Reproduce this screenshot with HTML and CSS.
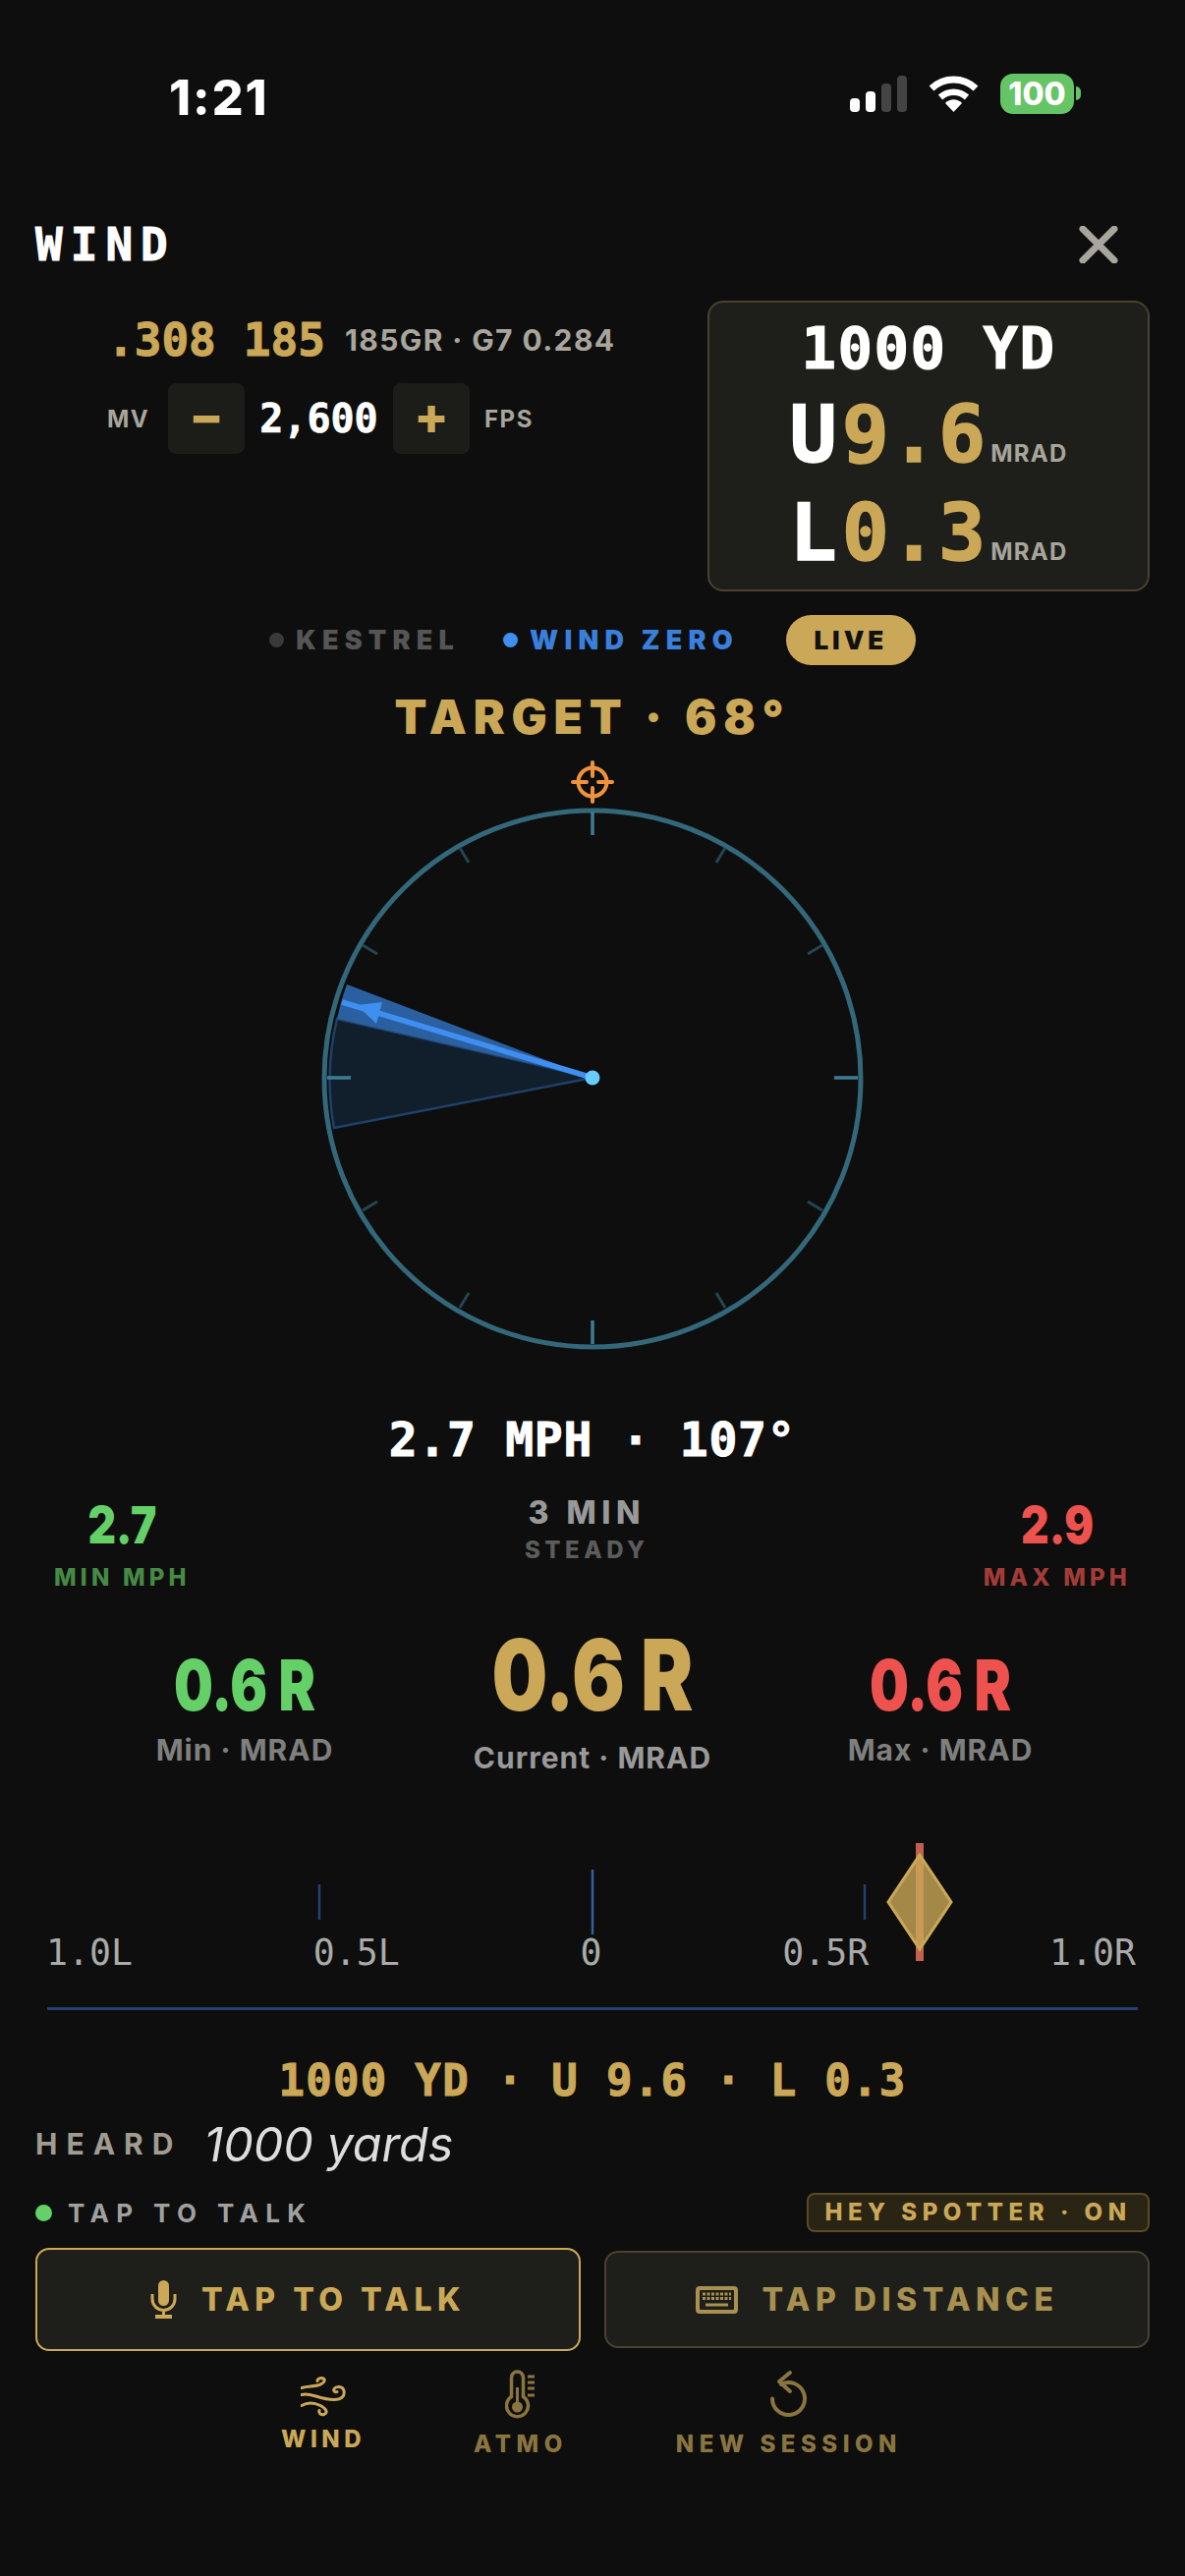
FILE: index.html
```html
<!DOCTYPE html>
<html>
<head>
<meta charset="utf-8"/>
<title>Wind</title>
<link rel="stylesheet" href="styles.css">
</head>
<body>
<div class="screen">
    <div class="status">
        <span class="time">1:21</span>
        <div class="status-icons">
            <svg class="signal" width="58" height="37" viewBox="0 0 58 37">
                <rect x="0" y="23" width="10" height="14" rx="4" fill="#fff"/>
                <rect x="16" y="16" width="10" height="21" rx="4" fill="#fff"/>
                <rect x="32" y="8" width="10" height="29" rx="4" fill="#444"/>
                <rect x="48" y="0" width="10" height="37" rx="4" fill="#444"/>
            </svg>
            <svg class="wifi" width="51" height="37" viewBox="0 0 51 37">
                <path d="M3 13 C16 1 35 1 48 13" fill="none" stroke="#fff" stroke-width="7"/>
                <path d="M12 22 C20 15 31 15 39 22" fill="none" stroke="#fff" stroke-width="6.5"/>
                <path d="M17 28 C22 23 29 23 34 28 L25.5 37 Z" fill="#fff"/>
            </svg>
            <div class="battery">100</div>
            <div class="battery-nib"></div>
        </div>
    </div>

    <div class="header">
        <span class="title">WIND</span>
        <svg width="40" height="38" viewBox="0 0 40 38">
            <path d="M4 3 L36 35 M36 3 L4 35" stroke="#a8a59c" stroke-width="7" stroke-linecap="round"/>
        </svg>
    </div>

    <div class="top">
        <div class="load">
            <div class="load-line">
                <span class="gold-num">.308</span>
                <span class="gold-num">185</span>
                <span class="load-info">185GR · G7 0.284</span>
            </div>
            <div class="mv-line">
                <span class="mv-label">MV</span>
                <span class="step">−</span>
                <span class="mv-val">2,600</span>
                <span class="step">+</span>
                <span class="mv-label fps">FPS</span>
            </div>
        </div>
        <div class="panel">
            <div class="panel-range">1000 YD</div>
            <div class="panel-line"><span class="dir">U</span><span class="amt">9.6</span><span class="unit">MRAD</span></div>
            <div class="panel-line"><span class="dir">L</span><span class="amt">0.3</span><span class="unit">MRAD</span></div>
        </div>
    </div>

    <div class="sources">
        <span class="source kestrel"><i></i>KESTREL</span>
        <span class="source windzero"><i></i>WIND ZERO</span>
        <span class="live">LIVE</span>
    </div>

    <div class="target">TARGET · 68°</div>

    <svg class="compass" width="600" height="610" viewBox="0 0 600 610">
        <g fill="none" stroke="#f0923c" stroke-width="4">
            <circle cx="300" cy="26" r="14.5"/>
            <path d="M300 6 V20 M300 32 V46 M280 26 H294 M306 26 H320" stroke-linecap="round"/>
        </g>
        <circle cx="300" cy="328" r="273" fill="none" stroke="#33687a" stroke-width="5"/>
        <g stroke="#244650" stroke-width="3">
            <path d="M165 93 L174 108 M435 93 L426 108 M66 192 L81 201 M534 192 L519 201 M66 462 L81 453 M534 462 L519 453 M165 561 L174 546 M435 561 L426 546"/>
        </g>
        <path d="M300 327 L37 378 A268 268 0 0 1 40 267 Z" fill="#101f2b" stroke="#1f4068" stroke-width="2.5"/>
        <path d="M300 327 L40 267 A267 267 0 0 1 50 232 Z" fill="#2a5fa0"/>
        <path d="M300 327 L45 250" stroke="#3f8ff0" stroke-width="5.5"/>
        <path d="M60 253 L86 250 L80 272 Z" fill="#3f8ff0"/>
        <g stroke="#3d7d94" stroke-width="3.5">
            <path d="M300 56 V80 M300 574 V598 M30 327 H54 M546 327 H570"/>
        </g>
        <circle cx="300" cy="327" r="7.5" fill="#66ccff"/>
    </svg>

    <div class="wind-now">2.7 MPH · 107°</div>

    <div class="stats">
        <div class="stat">
            <div class="stat-num green">2.7</div>
            <div class="stat-label dim-green">MIN MPH</div>
        </div>
        <div class="stat steady">
            <div class="steady-num">3 MIN</div>
            <div class="steady-label">STEADY</div>
        </div>
        <div class="stat">
            <div class="stat-num red">2.9</div>
            <div class="stat-label dim-red">MAX MPH</div>
        </div>
    </div>

    <div class="holds">
        <div class="hold side">
            <div class="hold-val green">0.6 R</div>
            <div class="hold-label">Min · MRAD</div>
        </div>
        <div class="hold">
            <div class="hold-val big gold">0.6 R</div>
            <div class="hold-label">Current · MRAD</div>
        </div>
        <div class="hold side">
            <div class="hold-val red">0.6 R</div>
            <div class="hold-label">Max · MRAD</div>
        </div>
    </div>

    <div class="scale">
        <svg class="scale-marks" width="1206" height="120" viewBox="0 0 1206 120">
            <path d="M325 42 V78 M880 42 V78" stroke="#27406f" stroke-width="2.5"/>
            <path d="M603 27 V93" stroke="#3a5f9e" stroke-width="2.5"/>
            <rect x="932" y="0" width="8" height="120" fill="#c06050"/>
            <path d="M936 12 L968 60 L936 108 L904 60 Z" fill="#cba858" fill-opacity="0.8" stroke="#cba858" stroke-width="3"/>
        </svg>
        <div class="scale-labels">
            <span>1.0L</span><span>0.5L</span><span>0</span><span>0.5R</span><span>1.0R</span>
        </div>
        <div class="scale-line"></div>
    </div>

    <div class="summary">1000 YD · U 9.6 · L 0.3</div>

    <div class="heard">
        <span class="heard-label">HEARD</span>
        <span class="heard-text">1000 yards</span>
    </div>

    <div class="talk-row">
        <span class="talk-state"><i></i>TAP TO TALK</span>
        <span class="badge">HEY SPOTTER · ON</span>
    </div>

    <div class="buttons">
        <div class="btn active">
            <svg width="27" height="39" viewBox="0 0 27 39">
                <rect x="8" y="0" width="11" height="26" rx="5.5" fill="#cba858"/>
                <path d="M2 14 V19 a11.5 11.5 0 0 0 23 0 V14 M13.5 30 V36" fill="none" stroke="#cba858" stroke-width="3"/>
                <rect x="5" y="35" width="17" height="4" fill="#cba858"/>
            </svg>
            TAP TO TALK
        </div>
        <div class="btn">
            <svg width="43" height="28" viewBox="0 0 43 28">
                <rect width="43" height="28" rx="4" fill="#a89050"/>
                <rect x="4" y="4" width="35" height="20" rx="1" fill="#1e1f1a"/>
                <path d="M7 8 H36 M7 12.500 H36" stroke="#a89050" stroke-width="3" stroke-dasharray="3 1.500"/>
                <path d="M10 19 H33" stroke="#a89050" stroke-width="3"/>
            </svg>
            TAP DISTANCE
        </div>
    </div>

    <div class="nav">
        <div class="nav-item on">
            <svg width="46" height="44" viewBox="0 0 46 41">
                <g fill="none" stroke="#cba858" stroke-width="3" stroke-linecap="round">
                    <path d="M1 12 C8 10 12 11 19 9 C25 7 26 2 21 2 C18 2 17 4 17 5"/>
                    <path d="M1 19 C10 16 18 24 34 24 C42 24 45 20 44 15 C43 10 36 10 34 13 C33 15 35 17 37 16"/>
                    <path d="M1 30 C8 26 14 27 20 30 C26 33 28 37 24 39 C21 40 18 38 19 35"/>
                </g>
            </svg>
            <span>WIND</span>
        </div>
        <div class="nav-item">
            <svg width="31" height="54" viewBox="0 0 31 52">
                <path d="M6.500 27.500 V8 a6 6 0 0 1 12 0 V27.500 a11 11 0 1 1 -12 0 Z" fill="none" stroke="#8a7540" stroke-width="3.500"/>
                <path d="M12.500 18 V37" stroke="#8a7540" stroke-width="3"/>
                <circle cx="12.500" cy="38" r="5.500" fill="#8a7540"/>
                <path d="M23 7 H30 M23 13 H30 M23 19 H30 M23 26 H30" stroke="#8a7540" stroke-width="3"/>
            </svg>
            <span>ATMO</span>
        </div>
        <div class="nav-item">
            <svg width="39" height="54" viewBox="0 0 39 50">
                <g fill="none" stroke="#8a7540" stroke-width="4" stroke-linecap="round" stroke-linejoin="round">
                    <path d="M3 28.500 A16.500 16.500 0 1 0 12 13.800"/>
                    <path d="M21 2 L10 11 L21 21"/>
                </g>
            </svg>
            <span>NEW SESSION</span>
        </div>
    </div>
</div>
</body>
</html>
```

FILE: styles.css
```css
* { box-sizing: border-box; margin: 0; padding: 0; }
body { background: #0d0e0d; font-family: Inter, "Liberation Sans", sans-serif; }
i { display: block; border-radius: 50%; }

.screen { width: 1206px; height: 2622px; overflow: hidden; background: #0d0e0d; color: #fff; display: flex; flex-direction: column; }

.status { height: 210px; padding: 72px 106px 0 172px; display: flex; justify-content: space-between; align-items: flex-start; }
.time { font-size: 50px; font-weight: 800; letter-spacing: 2px; line-height: 54px; }
.status-icons { display: flex; align-items: center; height: 46px; }
.wifi { margin-left: 22px; }
.battery { margin-left: 22px; width: 75px; height: 41px; background: #65c466; border-radius: 13px; font-size: 32px; font-weight: 800; line-height: 41px; text-align: center; }
.battery-nib { margin-left: 2px; width: 5px; height: 14px; background: #65c466; border-radius: 0 7px 7px 0; }

.header { height: 96px; padding: 20px 68px 0 36px; display: flex; justify-content: space-between; align-items: flex-start; }
.title { font-family: "DejaVu Sans Mono", monospace; font-size: 46px; font-weight: 700; letter-spacing: 8px; line-height: 38px; -webkit-text-stroke: 1px #fff; }

.top { padding: 0 36px; display: flex; justify-content: space-between; }
.load { width: 684px; padding-top: 20px; }
.load-line { padding-left: 73px; display: flex; align-items: center; height: 40px; }
.gold-num { font-family: "DejaVu Sans Mono", monospace; font-size: 46px; font-weight: 700; color: #cba858; margin-right: 28px; line-height: 40px; -webkit-text-stroke: 1px #cba858; }
.gold-num + .gold-num { margin-right: 20px; }
.load-info { font-size: 30px; font-weight: 700; color: #a8a59c; letter-spacing: 1.400px; white-space: nowrap; }
.mv-line { margin-top: 24px; padding-left: 73px; display: flex; align-items: center; }
.mv-label { font-size: 24px; font-weight: 700; color: #a8a59c; letter-spacing: 1.500px; width: 62px; }
.fps { width: auto; margin-left: 15px; }
.step { width: 78px; height: 72px; background: #1c1d19; border-radius: 8px; color: #cba858; font-size: 52px; font-weight: 800; line-height: 68px; text-align: center; }
.mv-val { width: 151px; text-align: center; font-family: "DejaVu Sans Mono", monospace; font-size: 40px; font-weight: 700; -webkit-text-stroke: 0.7px #fff; }

.panel { width: 450px; height: 296px; background: #1e1f1a; border: 2px solid #4a4130; border-radius: 16px; padding-top: 10px; display: flex; flex-direction: column; align-items: center; }
.panel-range { font-family: "DejaVu Sans Mono", monospace; font-size: 59px; font-weight: 700; letter-spacing: 1.500px; line-height: 74px; white-space: pre; -webkit-text-stroke: 1.200px #fff; }
.panel-line { height: 100px; margin-top: 1px; display: flex; align-items: baseline; font-family: "DejaVu Sans Mono", monospace; font-size: 80px; font-weight: 700; line-height: 100px; }
.panel-line + .panel-line { margin-top: 0; }
.dir { margin-right: 5px; -webkit-text-stroke: 1.500px #fff; }
.amt { color: #cba858; letter-spacing: 1px; -webkit-text-stroke: 1.500px #cba858; }
.unit { font-family: Inter, sans-serif; font-size: 24px; font-weight: 700; color: #a8a59c; margin-left: 4px; letter-spacing: 1.200px; }

.sources { margin-top: 24px; height: 51px; display: flex; justify-content: center; align-items: center; }
.source { display: flex; align-items: center; font-size: 27px; font-weight: 900; letter-spacing: 6.200px; }
.source i { width: 15px; height: 15px; margin-right: 12px; }
.kestrel { color: #555; }
.kestrel i { background: #3a3a3a; }
.windzero { color: #3a7fdc; margin-left: 44px; }
.windzero i { background: #3f8ff0; }
.live { margin-left: 48px; width: 132px; height: 51px; border-radius: 26px; background: #cba858; color: #111; font-size: 26px; font-weight: 900; letter-spacing: 4px; line-height: 51px; text-align: center; }

.target { margin-top: 28px; height: 50px; text-align: center; font-size: 48px; font-weight: 900; line-height: 50px; letter-spacing: 6.800px; color: #cba858; }
.compass { margin: 15px auto 0; display: block; }

.wind-now { margin-top: 55px; height: 60px; text-align: center; font-family: "DejaVu Sans Mono", monospace; font-size: 48px; font-weight: 700; line-height: 60px; letter-spacing: 0.700px; white-space: pre; -webkit-text-stroke: 1px #fff; }

.stats { margin-top: 27px; padding: 0 55px; display: flex; justify-content: space-between; }
.stat { text-align: center; }
.stat-num { font-size: 52px; font-weight: 900; line-height: 62px; transform: scaleX(0.85); }
.stat-label { margin-top: 7px; font-size: 24px; font-weight: 800; letter-spacing: 4.200px; line-height: 30px; }
.steady-num { font-size: 32px; font-weight: 800; letter-spacing: 5.500px; line-height: 36px; color: #999; }
.steady-label { margin-top: 5px; font-size: 24px; font-weight: 800; letter-spacing: 4.500px; line-height: 30px; color: #5c5c5c; }
.green { color: #65d068; }
.red { color: #ee524f; }
.gold { color: #cba858; }
.dim-green { color: #478a45; }
.dim-red { color: #a33c38; }

.holds { margin-top: 29px; display: grid; grid-template-columns: repeat(3, 354px); justify-content: center; align-items: end; }
.hold { text-align: center; }
.hold.side { padding-bottom: 8px; }
.hold-val { font-size: 72px; font-weight: 900; line-height: 74px; transform: scaleX(0.78); }
.hold-val.big { font-size: 100px; line-height: 110px; transform: scaleX(0.8); }
.hold-label { margin-top: 9px; font-size: 30px; font-weight: 700; line-height: 40px; letter-spacing: 1px; color: #999; }
.side .hold-label { color: #7f7f7f; }

.scale { position: relative; margin-top: 67px; padding-top: 92px; }
.scale-marks { position: absolute; left: 0; top: 0; }
.scale-labels { padding: 0 50px 0 47px; display: flex; justify-content: space-between; font-family: "DejaVu Sans Mono", monospace; font-size: 36.500px; line-height: 40px; color: #aaa; }
.scale-line { margin: 35px 48px 0; height: 3px; background: #27406f; }

.summary { margin-top: 45px; height: 54px; text-align: center; font-family: "DejaVu Sans Mono", monospace; font-size: 44px; font-weight: 700; line-height: 54px; letter-spacing: 1.300px; color: #cba858; white-space: pre; -webkit-text-stroke: 1px #cba858; }

.heard { margin-top: 7px; padding-left: 36px; height: 60px; display: flex; align-items: center; }
.heard-label { font-size: 30px; font-weight: 700; letter-spacing: 9px; color: #a09c92; }
.heard-text { margin-left: 22px; font-size: 48.500px; font-style: italic; font-weight: 400; color: #ddd; }

.talk-row { margin-top: 20px; padding: 0 36px; display: flex; justify-content: space-between; align-items: center; }
.talk-state { display: flex; align-items: center; font-size: 26px; font-weight: 700; letter-spacing: 7.400px; color: #a0a0a0; }
.talk-state i { width: 17px; height: 17px; background: #65d068; margin-right: 16px; }
.badge { width: 349px; height: 40px; background: #2a2415; border: 2px solid #5a4a25; border-radius: 8px; color: #cba858; font-size: 24px; font-weight: 800; letter-spacing: 5.500px; line-height: 36px; text-align: center; white-space: nowrap; }

.buttons { margin-top: 16px; padding: 0 36px; display: flex; align-items: center; justify-content: space-between; }
.btn { width: 555px; height: 99px; background: #1e1f1a; border: 2px solid #4a4130; border-radius: 14px; display: flex; justify-content: center; align-items: center; gap: 25px; font-size: 32px; font-weight: 800; letter-spacing: 5.500px; color: #a89050; }
.btn.active { height: 105px; border-color: #cba858; color: #cba858; }

.nav { margin-top: 18px; padding-right: 2px; display: flex; justify-content: center; gap: 110px; font-size: 24px; font-weight: 800; letter-spacing: 5.500px; color: #8a7540; }
.nav-item { display: flex; flex-direction: column; align-items: center; gap: 8px; line-height: 30px; }
.nav-item.on { margin-top: 6px; gap: 7px; color: #cba858; letter-spacing: 4.500px; }
```
